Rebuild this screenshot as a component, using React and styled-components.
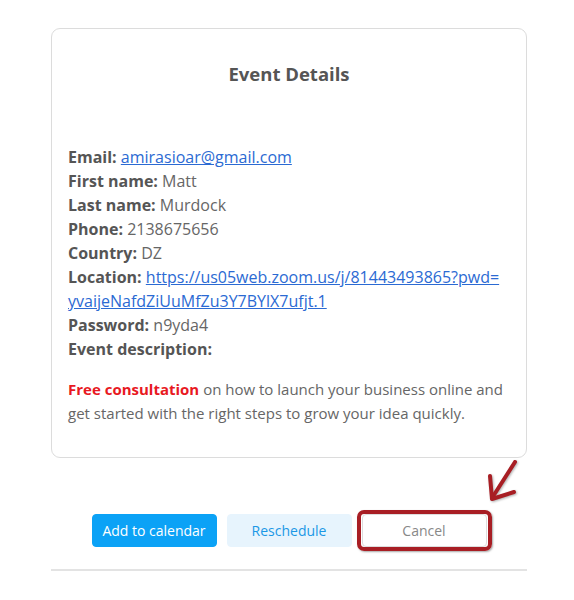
import React from "react";
import styled, { createGlobalStyle } from "styled-components";

const Global = createGlobalStyle`
  html, body { margin: 0; padding: 0; background: #fff; }
  body { font-family: "Open Sans", "Noto Sans", sans-serif; }
`;

const Page = styled.div`
  width: 476px;
  padding: 28px 0 0 51px;
`;

const Card = styled.section`
  border: 1px solid #dcdcdc;
  border-radius: 9px;
  padding: 31px 16px 32px;
`;

const Title = styled.h2`
  margin: 0 0 57px;
  text-align: center;
  font-size: 18.5px;
  line-height: 28px;
  font-weight: 700;
  color: #555;
`;

const Row = styled.div`
  font-size: 16px;
  line-height: 24px;
  color: #666;
`;

const Label = styled.b`
  color: #555;
  font-weight: 700;
`;

const Link = styled.a`
  color: #2b6ad3;
  text-decoration: underline;
`;

const Description = styled.p`
  margin: 16px 0 0;
  font-size: 15px;
  line-height: 24px;
  color: #666;
`;

const Highlight = styled.strong`
  color: #e8191f;
  font-weight: 700;
`;

const Actions = styled.div`
  display: flex;
  justify-content: center;
  gap: 10px;
  margin-top: 56px;
`;

const Button = styled.button`
  width: 125px;
  height: 33px;
  border-radius: 4px;
  font-family: inherit;
  font-size: 14px;
  cursor: pointer;
  border: 1px solid ${(p) => p.$border};
  background: ${(p) => p.$bg};
  color: ${(p) => p.$color};
  padding: 0;
`;

const Annotated = styled.div`
  position: relative;
`;

const RedBox = styled.div`
  position: absolute;
  left: -5px;
  top: -4px;
  right: -5px;
  bottom: -4px;
  border: 4px solid #a81e24;
  border-radius: 7px;
  box-shadow: 1px 1px 2px rgba(0, 0, 0, 0.35);
  pointer-events: none;
`;

const Arrow = styled.svg`
  position: absolute;
  left: 126px;
  top: -54px;
  overflow: visible;
`;

const Divider = styled.hr`
  margin: 22px 0 0;
  border: 0;
  border-top: 2px solid #e3e3e3;
`;

export default function App() {
  return (
    <Page>
      <Global />
      <Card>
        <Title>Event Details</Title>
        <Row>
          <Label>Email:</Label> <Link href="#">amirasioar@gmail.com</Link>
        </Row>
        <Row>
          <Label>First name:</Label> Matt
        </Row>
        <Row>
          <Label>Last name:</Label> Murdock
        </Row>
        <Row>
          <Label>Phone:</Label> 2138675656
        </Row>
        <Row>
          <Label>Country:</Label> DZ
        </Row>
        <Row>
          <Label>Location:</Label>{" "}
          <Link href="#">
            https://us05web.zoom.us/j/81443493865?pwd=
            <wbr />
            yvaijeNafdZiUuMfZu3Y7BYlX7ufjt.1
          </Link>
        </Row>
        <Row>
          <Label>Password:</Label> n9yda4
        </Row>
        <Row>
          <Label>Event description:</Label>
        </Row>
        <Description>
          <Highlight>Free consultation</Highlight> on how to launch your business
          online and get started with the right steps to grow your idea quickly.
        </Description>
      </Card>
      <Actions>
        <Button $bg="#0ba2f6" $border="#0ba2f6" $color="#fff">
          Add to calendar
        </Button>
        <Button $bg="#e7f4fd" $border="#e7f4fd" $color="#1b98e6">
          Reschedule
        </Button>
        <Annotated>
          <Button $bg="#fff" $border="#ddd" $color="#888">
            Cancel
          </Button>
          <RedBox />
          <Arrow width="30" height="45" viewBox="0 0 30 45">
            <g
              fill="none"
              stroke="#a81e24"
              strokeWidth="4"
              strokeLinecap="round"
              strokeLinejoin="round"
              filter="drop-shadow(1px 1px 1px rgba(0,0,0,0.3))"
            >
              <path d="M27 2 L4 38" />
              <path d="M2 16 L4 39 L26 32" />
            </g>
          </Arrow>
        </Annotated>
      </Actions>
      <Divider />
    </Page>
  );
}
